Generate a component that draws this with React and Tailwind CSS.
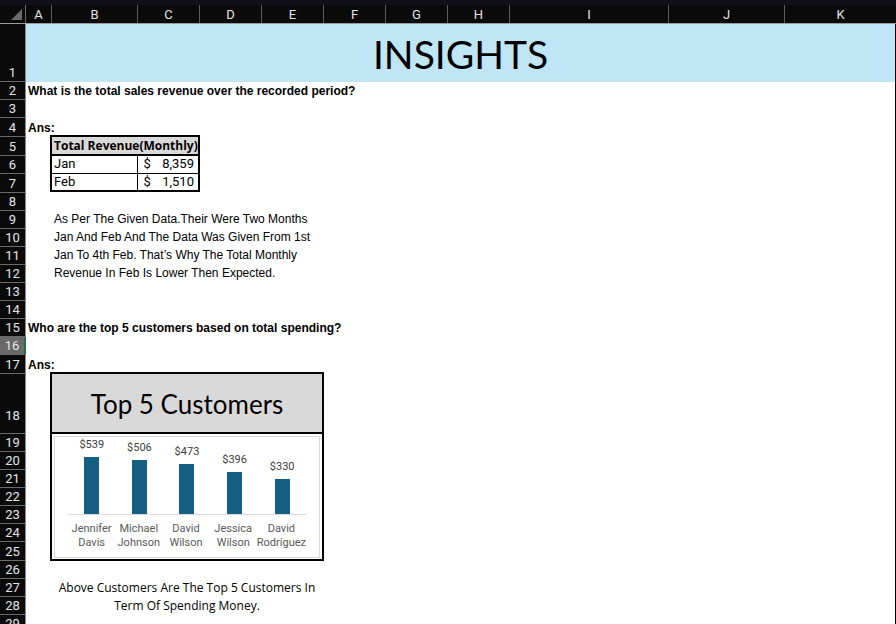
const columns = [
  { name: 'A', width: 'w-[26px]' },
  { name: 'B', width: 'w-[86px]' },
  { name: 'C', width: 'w-[62px]' },
  { name: 'D', width: 'w-[62px]' },
  { name: 'E', width: 'w-[62px]' },
  { name: 'F', width: 'w-[62px]' },
  { name: 'G', width: 'w-[62px]' },
  { name: 'H', width: 'w-[62px]' },
  { name: 'I', width: 'w-[159px]' },
  { name: 'J', width: 'w-[116px]' },
]

const tallRows = { 1: 'h-[58px]', 18: 'h-[60px] pb-[9px]' }
const mediumRows = [4, 5, 7, 17, 25]
const rows = Array.from({ length: 29 }, (_, i) => i + 1)

const customers = [
  { first: 'Jennifer', last: 'Davis', spent: 539, height: 57 },
  { first: 'Michael', last: 'Johnson', spent: 506, height: 54 },
  { first: 'David', last: 'Wilson', spent: 473, height: 50 },
  { first: 'Jessica', last: 'Wilson', spent: 396, height: 42 },
  { first: 'David', last: 'Rodriguez', spent: 330, height: 35 },
]

function rowHeight(n) {
  return tallRows[n] || (mediumRows.includes(n) ? 'h-[19px]' : 'h-[18px]')
}

function ColumnHeaders() {
  return (
    <div className="flex h-[19px] border-b border-[#9a9a9a] bg-[#0a0a0a] text-[13px] leading-5 text-[#e4e4e4]">
      <div className="flex w-[26px] shrink-0 items-end justify-end border-r border-[#6a6a6a] pr-[3px] pb-[3px]">
        <svg width="11" height="11" viewBox="0 0 11 11" aria-hidden="true">
          <path d="M11 0V11H0Z" fill="#6b6b6b" />
        </svg>
      </div>
      {columns.map((c) => (
        <div key={c.name} className={`shrink-0 border-r border-[#5c5c5c] text-center ${c.width}`}>
          {c.name}
        </div>
      ))}
      <div className="min-w-0 flex-1 text-center">K</div>
    </div>
  )
}

function RowHeaders() {
  return (
    <div className="w-[26px] shrink-0 bg-[#0a0a0a] text-[13px] leading-[17px] text-[#e4e4e4]">
      {rows.map((n) => (
        <div
          key={n}
          className={`flex items-end justify-center border-b border-b-[#6a6a6a] ${rowHeight(n)} ${
            n === 16 ? 'border-r-2 border-r-[#217346] bg-[#6a6a6a]' : 'border-r border-r-[#8a8a8a]'
          }`}
        >
          {n}
        </div>
      ))}
    </div>
  )
}

function RevenueTable() {
  return (
    <table className="ml-6 w-[150px] table-fixed border-collapse border-2 border-black font-['Roboto',sans-serif] text-[13px] leading-4">
      <colgroup>
        <col className="w-[86px]" />
        <col />
      </colgroup>
      <thead>
        <tr className="h-[19px]">
          <th
            colSpan={2}
            className="border-b-2 border-black bg-[#d9d9d9] p-0 pl-0.5 text-left font-['Open_Sans',sans-serif] text-[12px] font-bold whitespace-nowrap"
          >
            Total Revenue(Monthly)
          </th>
        </tr>
      </thead>
      <tbody>
        <tr className="h-[18px] border-b border-black">
          <td className="border-r border-black p-0 pl-0.5">Jan</td>
          <td className="p-0 px-1">
            <div className="flex justify-between pl-0.5">
              <span>$</span>
              <span>8,359</span>
            </div>
          </td>
        </tr>
        <tr className="h-[18px]">
          <td className="border-r border-black p-0 pl-0.5">Feb</td>
          <td className="p-0 px-1">
            <div className="flex justify-between pl-0.5">
              <span>$</span>
              <span>1,510</span>
            </div>
          </td>
        </tr>
      </tbody>
    </table>
  )
}

function CustomersChart() {
  return (
    <section className="ml-6 w-[274px] border-2 border-black font-['Roboto',sans-serif]">
      <h3 className="flex h-[60px] items-center justify-center border-b-2 border-black bg-[#d9d9d9] pt-0.5 font-['Lato',sans-serif] text-[26px]">
        Top 5 Customers
      </h3>
      <div className="p-0.5 pb-px">
        <div className="h-[122px] border border-[#d9d9d9] px-[13px] text-[11px] text-[#595959]">
          <div className="flex h-[78px] items-end border-b border-[#d9d9d9]">
            {customers.map((c) => (
              <div key={c.spent} className="flex flex-1 flex-col items-center">
                <span className="pb-1 leading-4 text-[#404040]">${c.spent}</span>
                <div className="w-[15px] bg-[#156082]" style={{ height: c.height }} />
              </div>
            ))}
          </div>
          <div className="flex pt-[7px] text-center leading-[14px]">
            {customers.map((c) => (
              <div key={c.spent} className="flex flex-1 flex-col items-center">
                <span>{c.first}</span>
                <span>{c.last}</span>
              </div>
            ))}
          </div>
        </div>
      </div>
    </section>
  )
}

function Sheet() {
  return (
    <main className="min-w-0 flex-1 border-r border-black bg-white font-['Liberation_Sans',sans-serif] text-[12px] leading-[18px] text-black">
      <h1 className="flex h-[58px] items-center justify-center bg-[#c0e6f5] pt-0.5 font-['Lato',sans-serif] text-[39px]">
        INSIGHTS
      </h1>
      <section className="h-[237px]">
        <h2 className="pl-0.5 font-bold">What is the total sales revenue over the recorded period?</h2>
        <p className="mt-[21px] pl-0.5 leading-[14px] font-bold">Ans:</p>
        <RevenueTable />
        <p className="mt-[18px] ml-7 w-[272px]">
          As Per The Given Data.Their Were Two Months
          <br />
          Jan And Feb And The Data Was Given From 1st
          <br />
          Jan To 4th Feb. That’s Why The Total Monthly
          <br />
          Revenue In Feb Is Lower Then Expected.
        </p>
      </section>
      <section>
        <h2 className="pl-0.5 font-bold">Who are the top 5 customers based on total spending?</h2>
        <p className="mt-[21px] pl-0.5 leading-[14px] font-bold">Ans:</p>
        <CustomersChart />
        <p className="mt-[18px] ml-6 w-[274px] text-center font-['Open_Sans',sans-serif]">
          Above Customers Are The Top 5 Customers In
          <br />
          Term Of Spending Money.
        </p>
      </section>
    </main>
  )
}

export default function App() {
  return (
    <div className="h-screen overflow-hidden bg-white font-['Roboto',sans-serif]">
      <div className="h-[5px] bg-[#10101c]" />
      <ColumnHeaders />
      <div className="flex">
        <RowHeaders />
        <Sheet />
      </div>
    </div>
  )
}
